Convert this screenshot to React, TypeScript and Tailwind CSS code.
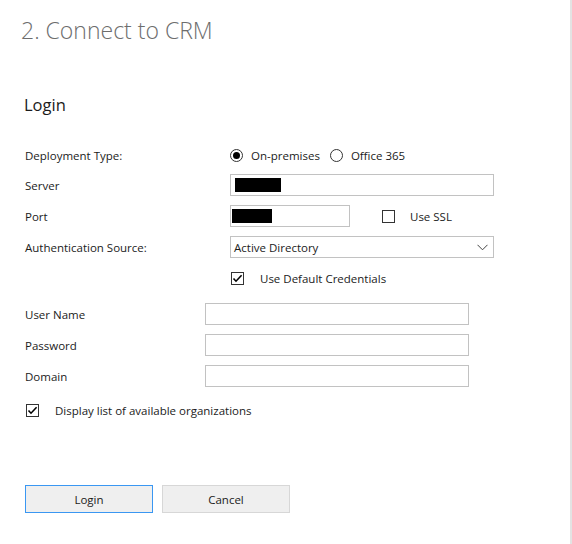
function Radio({ checked }: { checked?: boolean }) {
  return (
    <span className="flex h-[13px] w-[13px] items-center justify-center rounded-full border border-[#333333] bg-white">
      {checked && <span className="h-[7px] w-[7px] rounded-full bg-black" />}
    </span>
  );
}

function Checkbox({ checked }: { checked?: boolean }) {
  return (
    <span className="flex h-[13px] w-[13px] items-center justify-center border border-[#333333] bg-white">
      {checked && (
        <svg width="11" height="11" viewBox="0 0 11 11" fill="none">
          <path d="M1.5 5.5 L4 8.2 L9.6 2.2" stroke="#000" strokeWidth="1.6" />
        </svg>
      )}
    </span>
  );
}

function Field({ width, children }: { width: string; children?: React.ReactNode }) {
  return (
    <div className={`flex h-[22px] items-center border border-[#c2c2c2] bg-white ${width}`}>
      {children}
    </div>
  );
}

const userFields = ['User Name', 'Password', 'Domain'];

export default function App() {
  return (
    <div
      className="h-[544px] w-[572px] overflow-hidden border-r-2 border-[#e3e3e3] bg-white text-[11.5px] text-[#1b1b1b]"
      style={{ fontFamily: '"Open Sans", "Noto Sans", sans-serif' }}
    >
      <h1 className="mt-[14px] flex h-8 items-center pl-[21px] text-[23px] font-light text-[#6d6d6d]">
        2. Connect to CRM
      </h1>

      <h2 className="mt-[47px] flex h-6 items-center pl-[24px] text-[16.5px] text-[#1b1b1b]">
        Login
      </h2>

      <div className="mt-[27px] pl-[25px]">
        <div className="flex h-[22px] items-center">
          <span className="w-[205px] pt-[1px]">Deployment Type:</span>
          <div className="flex items-center">
            <Radio checked />
            <span className="ml-2 pt-[1px]">On-premises</span>
            <span className="ml-[10px]">
              <Radio />
            </span>
            <span className="ml-2 pt-[1px]">Office 365</span>
          </div>
        </div>

        <div className="mt-2 flex h-[22px] items-center">
          <span className="w-[205px] pt-[1px]">Server</span>
          <Field width="w-[264px]">
            <span className="ml-1 h-[14px] w-[46px] bg-black" />
          </Field>
        </div>

        <div className="mt-[9px] flex h-[22px] items-center">
          <span className="w-[205px] pt-[1px]">Port</span>
          <Field width="w-[120px]">
            <span className="ml-[1px] h-[14px] w-[40px] bg-black" />
          </Field>
          <span className="ml-[32px]">
            <Checkbox />
          </span>
          <span className="ml-[15px] pt-[1px]">Use SSL</span>
        </div>

        <div className="mt-[9px] flex h-[22px] items-center">
          <span className="w-[205px] pt-[1px]">Authentication Source:</span>
          <Field width="w-[264px] justify-between pl-[3px] pr-[5px]">
            <span className="pt-[1px]">Active Directory</span>
            <svg width="11" height="7" viewBox="0 0 11 7" fill="none">
              <path d="M0.5 0.8 L5.5 5.8 L10.5 0.8" stroke="#444" strokeWidth="1" />
            </svg>
          </Field>
        </div>

        <div className="mt-[10px] flex h-[21px] items-center pl-[206px]">
          <Checkbox checked />
          <span className="ml-[16px] pt-[1px]">Use Default Credentials</span>
        </div>

        <div className="mt-[14px] flex flex-col gap-[9px]">
          {userFields.map((label) => (
            <div key={label} className="flex h-[22px] items-center">
              <span className="w-[180px] pt-[1px]">{label}</span>
              <Field width="w-[264px]" />
            </div>
          ))}
        </div>

        <div className="mt-[13px] flex h-[21px] items-center pl-[1px]">
          <Checkbox checked />
          <span className="ml-[16px] pt-[1px]">Display list of available organizations</span>
        </div>

        <div className="mt-[64px] flex gap-[9px]">
          <button className="h-[28px] w-[128px] border border-[#3a97f2] bg-[#efefef] pt-[1px] text-[11.5px] text-[#1b1b1b]">
            Login
          </button>
          <button className="h-[28px] w-[128px] border border-[#d7d7d7] bg-[#efefef] pt-[1px] text-[11.5px] text-[#1b1b1b]">
            Cancel
          </button>
        </div>
      </div>
    </div>
  );
}
